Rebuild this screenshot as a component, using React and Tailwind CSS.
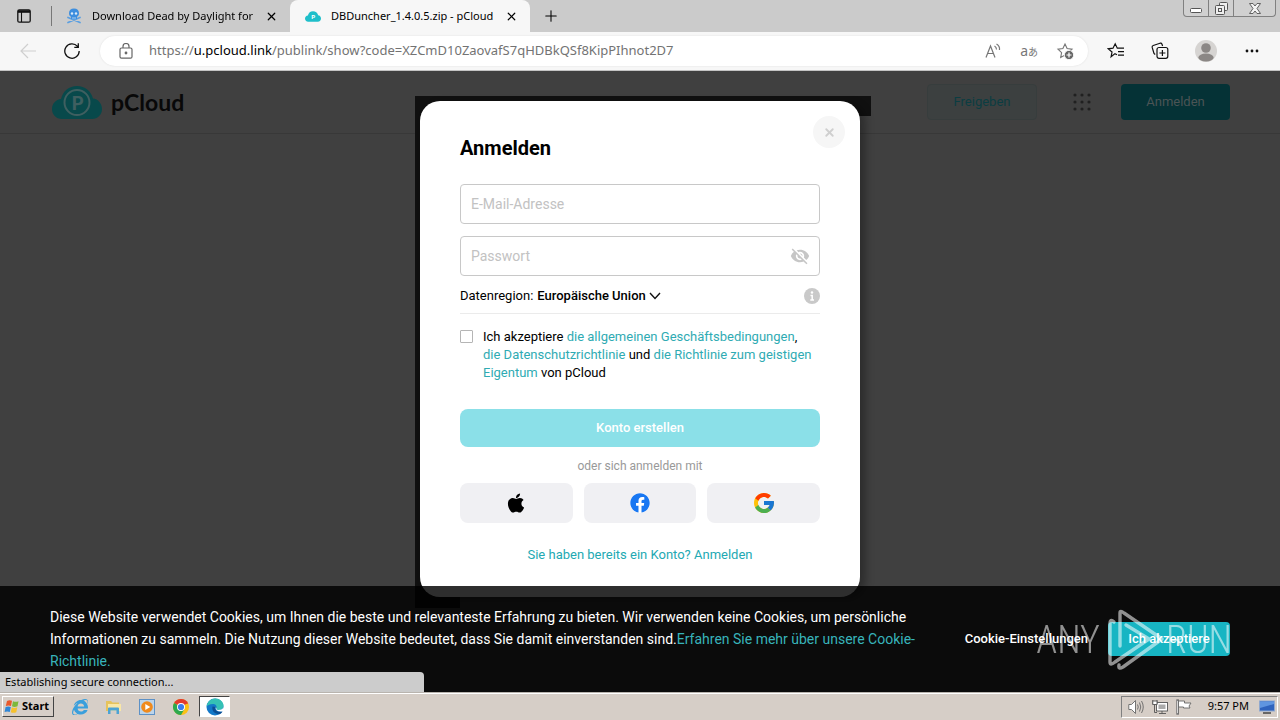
import React from "react";
import { FaApple, FaFacebook, FaInternetExplorer } from "react-icons/fa";
import { FcGoogle } from "react-icons/fc";
import { MdVisibilityOff } from "react-icons/md";
import { X, Plus } from "lucide-react";

const CLOUD = "M10 33C4 33 0 28.500 0 23C0 17.500 4 13.500 9 13C11 5 17 0 25 0C33 0 39 5 41 12.500C46 13 50 17.500 50 23C50 28.500 46 33 40 33Z";

function CloudLogo({ className, fill, ring, ringWidth }) {
  return (
    <svg viewBox="0 0 50 33" className={className} aria-hidden="true">
      <path d={CLOUD} fill={fill} />
      <circle cx="25" cy="16.500" r="12.500" fill="none" stroke={ring} strokeWidth={ringWidth} />
      <text x="25.500" y="23.500" textAnchor="middle" fontSize="19" fontWeight="900" fontFamily="Lato, sans-serif" fill={ring}>P</text>
    </svg>
  );
}

function Skull() {
  return (
    <svg viewBox="0 0 16 16" className="h-4 w-4 shrink-0" aria-hidden="true">
      <path d="M2 9.500L14 14.500M14 9.500L2 14.500" stroke="#5b9fe0" strokeWidth="1.800" strokeLinecap="round" />
      <path d="M8 .5C4.800.5 3 2.600 3 5.200C3 7 3.800 8 5 8.700V11H11V8.700C12.200 8 13 7 13 5.200C13 2.600 11.200.5 8 .5Z" fill="#3d8ede" />
      <circle cx="6" cy="5.500" r="1.200" fill="#dcebf8" />
      <circle cx="10" cy="5.500" r="1.200" fill="#dcebf8" />
      <path d="M7 9V11M9 9V11" stroke="#dcebf8" strokeWidth=".7" />
    </svg>
  );
}

const STAR = "M9 2L11.100 6.600L16 7.200L12.400 10.600L13.300 15.500L9 13.100L4.700 15.500L5.600 10.600L2 7.200L6.900 6.600Z";

function TabStrip() {
  return (
    <div className="flex h-8 items-center bg-[#cbcbcb] text-[11px] text-black">
      <button aria-label="Tab actions" className="flex w-[48px] shrink-0 justify-center">
        <svg viewBox="0 0 14 14" className="h-[14px] w-[14px]" fill="none" stroke="#111">
          <rect x=".8" y=".8" width="12.400" height="12.400" rx="1.500" strokeWidth="1.300" />
          <path d="M1 2.500H13" strokeWidth="2.600" />
          <path d="M4.500 3V13" strokeWidth="1.100" />
        </svg>
      </button>
      <div className="ml-[3px] h-5 w-px bg-[#777]" />
      <div className="flex h-full w-[238px] items-center pl-[14px] pr-3">
        <Skull />
        <span className="ml-[10px] flex-1 whitespace-nowrap bg-gradient-to-r from-black from-90% to-[#aaa] bg-clip-text text-transparent">
          Download Dead by Daylight for
        </span>
        <button aria-label="Close tab"><X size={13} strokeWidth={2.2} /></button>
      </div>
      <div className="flex h-full w-[240px] items-center rounded-t-lg bg-[#f7f7f7] pl-[15px] pr-3">
        <CloudLogo className="h-[11px] w-4 shrink-0" fill="#1fbfca" ring="#fff" ringWidth="0" />
        <span className="ml-[10px] flex-1 whitespace-nowrap">DBDuncher_1.4.0.5.zip - pCloud</span>
        <button aria-label="Close tab"><X size={13} strokeWidth={2.2} /></button>
      </div>
      <button aria-label="New tab" className="ml-3"><Plus size={18} strokeWidth={1.4} /></button>
      <div className="ml-auto mr-1 flex h-[17px] self-start rounded-b border border-t-0 border-[#808080] bg-[#d0d0d0]">
        <button aria-label="Minimize" className="flex w-[25px] items-center justify-center border-r border-[#808080]">
          <svg viewBox="0 0 12 12" className="h-3 w-3"><rect x=".5" y="6.500" width="11" height="4" rx="1" fill="#fff" stroke="#555" /></svg>
        </button>
        <button aria-label="Restore" className="flex w-[25px] items-center justify-center border-r border-[#808080]">
          <svg viewBox="0 0 13 13" className="h-[13px] w-[13px]" fill="#eee" stroke="#555">
            <rect x="4.500" y=".5" width="8" height="8" rx="1" />
            <rect x=".5" y="3.500" width="9" height="9" rx="1" />
            <rect x="3.500" y="6.500" width="3" height="3" />
          </svg>
        </button>
        <button aria-label="Close" className="flex w-[41px] items-center justify-center">
          <svg viewBox="0 0 12 11" className="h-[11px] w-3"><path d="M.5.5H4L6 3L8 .5H11.500L8 5.500L11.500 10.500H8L6 8L4 10.500H.5L4 5.500Z" fill="#f4f4f4" stroke="#555" strokeWidth=".9" /></svg>
        </button>
      </div>
    </div>
  );
}

function Toolbar() {
  return (
    <div className="flex h-[39px] items-center border-b border-[#c4c4c4] bg-[#f7f7f7] pr-[21px]">
      <button aria-label="Back" className="ml-5">
        <svg viewBox="0 0 16 16" className="h-4 w-4" fill="none" stroke="#cfcfcf" strokeWidth="1.200"><path d="M16 8H1M8 1L1 8L8 15" /></svg>
      </button>
      <button aria-label="Refresh" className="ml-7">
        <svg viewBox="0 0 16 16" className="h-4 w-4" fill="none" stroke="#111" strokeWidth="1.300"><path d="M13.500 3.400A7.200 7.200 0 1 0 15.200 8M14.300.3V4.300H10.300" /></svg>
      </button>
      <div className="ml-5 flex h-[30px] flex-1 items-center rounded-full bg-white pl-[19px] pr-[14px] shadow-[0_0_2px_#ddd]">
        <svg viewBox="0 0 14 16" className="h-4 w-[14px]" fill="none" stroke="#666" strokeWidth="1.200">
          <rect x="1" y="5" width="12" height="10.200" rx="1.500" /><path d="M4 5V3.500A3 3 0 0 1 10 3.500V5" /><circle cx="7" cy="10" r=".8" fill="#666" />
        </svg>
        <span className="ml-4 flex-1 whitespace-nowrap text-[13px] text-[#737373]">
          https://<span className="text-black">u.pcloud.link</span>/publink/show?code=XZCmD10ZaovafS7qHDBkQSf8KipPIhnot2D7
        </span>
        <button aria-label="Read aloud">
          <svg viewBox="0 0 18 16" className="h-4 w-[18px]" fill="none" stroke="#777" strokeWidth="1.200"><path d="M2 14.500L6.500 3L11 14.500M3.600 10.500H9.400M10.500 3A4 4 0 0 1 12.500 6.500M12.500 1A6 6 0 0 1 15.500 7" /></svg>
        </button>
        <button aria-label="Translate" className="ml-[18px] flex items-baseline text-[#777]">
          <span className="text-[14px] leading-4">a</span><span className="font-['Noto_Sans_CJK_JP',sans-serif] text-[10px] leading-4">あ</span>
        </button>
        <button aria-label="Add to favorites" className="ml-[18px]">
          <svg viewBox="0 0 18 18" className="h-[18px] w-[18px]" fill="none" stroke="#777" strokeWidth="1.100">
            <path d={STAR} /><circle cx="13" cy="13" r="4.600" fill="#666" stroke="#fff" strokeWidth=".8" /><path d="M13 10.500V15.500M10.500 13H15.500" stroke="#fff" strokeWidth="1.200" />
          </svg>
        </button>
      </div>
      <button aria-label="Favorites" className="ml-[19px]">
        <svg viewBox="0 0 18 18" className="h-[18px] w-[18px]" fill="none" stroke="#111" strokeWidth="1.200">
          <path d="M10 12.700L8 11.600L4.100 14.800L5 10L1.200 6.800L6 6.200L8.200 1.800L10.300 6.200H17M11 9.700H17M11 13.200H17" />
        </svg>
      </button>
      <button aria-label="Collections" className="ml-[26px]">
        <svg viewBox="0 0 18 18" className="h-[18px] w-[18px]" fill="none" stroke="#111" strokeWidth="1.200">
          <path d="M4.200 12.500L3 11.500L1.200 5.500Q.8 4 2.200 3.500L9 1.200Q10.500.8 11 2.200L11.600 4" /><rect x="6" y="5.500" width="10.800" height="10.800" rx="2" /><path d="M11.400 8V14M8.400 11H14.400" />
        </svg>
      </button>
      <button aria-label="Profile" className="ml-[26px]">
        <svg viewBox="0 0 22 22" className="h-[22px] w-[22px]"><circle cx="11" cy="11" r="11" fill="#d6d4d2" /><circle cx="11" cy="8" r="4.800" fill="#8b8785" /><ellipse cx="11" cy="17.500" rx="7.600" ry="4" fill="#8b8785" /></svg>
      </button>
      <button aria-label="Settings and more" className="ml-7">
        <svg viewBox="0 0 14 4" className="h-1 w-[14px]" fill="#111"><circle cx="2" cy="2" r="1.400" /><circle cx="7" cy="2" r="1.400" /><circle cx="12" cy="2" r="1.400" /></svg>
      </button>
    </div>
  );
}

function SiteHeader() {
  return (
    <header className="flex h-[63px] items-center border-b border-[#383838] px-[50px]">
      <a href="#home" className="ml-[2px] flex items-center">
        <CloudLogo className="h-[33px] w-[50px]" fill="#08494b" ring="#3f5f60" ringWidth="2" />
        <span className="ml-[9px] font-[Lato,sans-serif] text-[23px] font-bold leading-7 text-[#080808]">pCloud</span>
      </a>
      <button className="ml-auto h-9 w-[110px] rounded border border-[#373d3d] bg-[#3c4040] text-[13px] text-[#0b3d42]">Freigeben</button>
      <button aria-label="Apps" className="ml-9">
        <svg viewBox="0 0 18 18" className="h-[18px] w-[18px]" fill="#202020">
          {[2, 9, 16].map((y) => [2, 9, 16].map((x) => <circle key={x + "-" + y} cx={x} cy={y} r="1.600" />))}
        </svg>
      </button>
      <button className="ml-[30px] h-9 w-[109px] rounded bg-[#053236] text-[13px] text-[#4b5455]">Anmelden</button>
    </header>
  );
}

function LoginDialog() {
  const social = "flex h-10 items-center justify-center rounded-lg bg-[#f0f0f3]";
  const link = "text-[#2fabb3]";
  return (
    <div className="absolute inset-0 flex items-start justify-center pt-[30px]">
      <div className="relative w-[440px]">
        <div className="absolute -left-[5px] -top-[5px] h-5 w-[456px] bg-[#101010]" />
        <div className="absolute -bottom-[11px] -left-[5px] -top-[5px] w-[45px] bg-[#101010]" />
        <form role="dialog" aria-label="Anmelden" className="relative rounded-[20px] bg-white px-10 pb-[33px] pt-[35px] text-[13px] text-black shadow-[6px_2px_8px_rgba(0,0,0,0.3)]">
          <h1 className="text-[20px] font-bold leading-6">Anmelden</h1>
          <button type="button" aria-label="Schließen" className="absolute right-[15px] top-[15px] flex h-8 w-8 items-center justify-center rounded-full bg-[#f6f6f6] text-[#cfcfcf]">
            <X size={13} strokeWidth={3.4} />
          </button>
          <input type="email" aria-label="E-Mail-Adresse" placeholder="E-Mail-Adresse" className="mt-6 block h-10 w-full rounded border border-[#c8c8c8] px-[10px] text-[14px] placeholder:text-[#c2c2c2]" />
          <div className="relative mt-3">
            <input type="password" aria-label="Passwort" placeholder="Passwort" className="block h-10 w-full rounded border border-[#c8c8c8] px-[10px] text-[14px] placeholder:text-[#c2c2c2]" />
            <button type="button" aria-label="Passwort anzeigen" className="absolute right-[10px] top-[10px] text-[#c6c6c6]"><MdVisibilityOff size={20} /></button>
          </div>
          <div className="flex h-[38px] items-center border-b border-[#ebebeb] pt-[2px]">
            <label htmlFor="region">Datenregion:</label>
            <select id="region" className="ml-1 appearance-none bg-transparent font-medium">
              <option>Europäische Union</option>
            </select>
            <svg viewBox="0 0 12 8" className="ml-[3px] h-2 w-3" fill="none" stroke="#111" strokeWidth="1.400"><path d="M1 1L6 6.500L11 1" /></svg>
            <button type="button" aria-label="Info" className="ml-auto">
              <svg viewBox="0 0 16 16" className="h-4 w-4"><circle cx="8" cy="8" r="8" fill="#c9c9c9" /><circle cx="8" cy="4.500" r="1.200" fill="#fff" /><path d="M6.500 7.500H8.200V12M6.300 12H10" fill="none" stroke="#fff" strokeWidth="1.500" /></svg>
            </button>
          </div>
          <div className="mt-[14px] flex items-start gap-[10px]">
            <input id="terms" type="checkbox" className="mt-[2px] h-[13px] w-[13px] shrink-0 appearance-none rounded-[1px] border border-[#b5b5b5]" />
            <label htmlFor="terms" className="leading-[18px]">
              Ich akzeptiere <a href="#agb" className={link}>die allgemeinen Geschäftsbedingungen</a>,<br />
              <a href="#privacy" className={link}>die Datenschutzrichtlinie</a> und <a href="#ip" className={link}>die Richtlinie zum geistigen Eigentum</a> von pCloud
            </label>
          </div>
          <button type="submit" className="mt-[27px] h-[38px] w-full rounded-lg bg-[#8be0e8] font-medium text-white">Konto erstellen</button>
          <p className="mt-[10px] text-center text-[12px] leading-[18px] text-[#999]">oder sich anmelden mit</p>
          <div className="mt-2 grid grid-cols-3 gap-[11px]">
            <button type="button" aria-label="Apple" className={social}><FaApple size={22} /></button>
            <button type="button" aria-label="Facebook" className={social}><span className="rounded-full bg-white"><FaFacebook size={20} color="#1877f2" /></span></button>
            <button type="button" aria-label="Google" className={social}><FcGoogle size={24} /></button>
          </div>
          <p className="mt-[23px] text-center leading-[18px]"><a href="#login" className="text-[#22a9b3]">Sie haben bereits ein Konto? Anmelden</a></p>
        </form>
      </div>
    </div>
  );
}

function Watermark() {
  return (
    <div className="pointer-events-none absolute right-12 top-[22px] flex h-16 items-center font-['Roboto_Condensed','Liberation_Sans_Narrow',sans-serif] text-[38px] font-light leading-none text-white opacity-55">
      <span>ANY</span>
      <svg viewBox="0 0 60 64" className="ml-[6px] h-16 w-[60px]" fill="none" stroke="#fff" strokeWidth="3.400" strokeLinejoin="round" strokeLinecap="round">
        <path d="M14 38V5Q14 2 18 5L56 31L17 59Q12 62 13 57" />
        <path d="M8 14Q4 10 4 16V54Q4 58 9 54L43 31L20 17" />
      </svg>
      <span>RUN</span>
    </div>
  );
}

function CookieBanner() {
  return (
    <div className="absolute inset-x-0 bottom-0 flex h-[106px] items-start bg-black/82 px-[50px] pt-5 text-white">
      <p className="max-w-[880px] flex-1 text-[14px] leading-[22px]">
        Diese Website verwendet Cookies, um Ihnen die beste und relevanteste Erfahrung zu bieten. Wir verwenden keine Cookies, um persönliche Informationen zu sammeln. Die Nutzung dieser Website bedeutet, dass Sie damit einverstanden sind.<a href="#cookies" className="text-[#38b4bb]">Erfahren Sie mehr über unsere Cookie-Richtlinie.</a>
      </p>
      <div className="ml-auto mt-4 flex items-center gap-5 text-[13px] font-medium">
        <button className="whitespace-nowrap">Cookie-Einstellungen</button>
        <button className="h-[34px] w-[122px] rounded bg-[#17b5c3]">Ich akzeptiere</button>
      </div>
      <Watermark />
    </div>
  );
}

function EdgeIcon() {
  return (
    <svg viewBox="0 0 18 18" className="h-[18px] w-[18px]">
      <circle cx="9" cy="9" r="8.500" fill="#1378c8" />
      <path d="M.6 8.500C1.200 3.500 5 .5 9.200.5C14 .5 17.500 4 17.500 7.500C17.500 10.500 15 12 12.500 12C10.500 12 10 11 10.500 10C11 8.500 10 6 7 6C3.500 6 1 7.500.6 8.500Z" fill="#35c1b5" />
      <path d="M6.500 8.500C5.500 13 8.500 16 13.500 16.200C15 15.500 16 14.500 16.600 13.200C12 15 8.500 12.500 9.500 9Z" fill="#0b4e94" />
      <path d="M10.500 10C10 11 10.500 12 12.500 12C14.500 12 16 11.300 17.500 9.500L18 13C13 14.500 9.500 13 9.500 9.500Z" fill="#fff" />
    </svg>
  );
}

function Taskbar() {
  return (
    <footer className="flex h-7 items-center border-t border-[#b9b4ae] bg-[#d6cec7] pl-[2px] pr-[2px] shadow-[inset_0_1px_0_#fff]">
      <button className="flex h-[21px] w-[52px] items-center gap-[2px] border border-b-[#444] border-l-white border-r-[#444] border-t-white px-[1px] text-[11px] font-bold text-black">
        <svg viewBox="0 0 16 15" className="h-[15px] w-4 shrink-0">
          <path d="M3 2Q5.500.5 8 1.800L7 7Q4.500 5.800 1.800 7Z" fill="#e9592b" /><path d="M9 2.200Q11.500 3.500 14.500 2.200L13.500 7.200Q10.500 8.500 8 7.300Z" fill="#7db83a" />
          <path d="M1.600 8Q4.300 6.800 6.800 8L5.800 13Q3.300 11.800.6 13Z" fill="#2f86d6" /><path d="M7.800 8.300Q10.500 9.500 13.300 8.200L12.300 13.200Q9.500 14.500 6.800 13.200Z" fill="#f6c12d" />
        </svg>
        <span>Start</span>
      </button>
      <button aria-label="Internet Explorer" className="ml-[18px] text-[#3a9fdc]"><FaInternetExplorer size={16} /></button>
      <button aria-label="Explorer" className="ml-[17px]">
        <svg viewBox="0 0 17 16" className="h-4 w-[17px]"><path d="M1 2H6L7.500 3.500H14V12H1Z" fill="#e6c35c" /><path d="M3 5H16V12H3Z" fill="#f9e7a6" /><path d="M3 15V9.500Q3 8.500 4 8.500H13Q14 8.500 14 9.500V15H11.500V11.500H5.500V15Z" fill="#4da3d4" /></svg>
      </button>
      <button aria-label="Media Player" className="ml-[17px]">
        <svg viewBox="0 0 16 16" className="h-4 w-4"><rect x=".5" y=".5" width="15" height="15" fill="#bcd4ea" stroke="#5d91c6" /><circle cx="8" cy="8" r="5.800" fill="#f08a1d" /><path d="M6.300 5L11.300 8L6.300 11Z" fill="#fff" /></svg>
      </button>
      <button aria-label="Chrome" className="ml-[18px]">
        <svg viewBox="0 0 16 16" className="h-4 w-4"><circle cx="8" cy="8" r="8" fill="#fbc116" /><path d="M8 8L1.070 4A8 8 0 0 1 14.930 4Z" fill="#e33b2e" /><path d="M8 8L1.070 4A8 8 0 0 0 8 16L11.500 10Z" fill="#2da94f" /><path d="M8 4.500H15.200L14.930 4L8 3Z" fill="#e33b2e" /><circle cx="8" cy="8" r="4" fill="#fff" /><circle cx="8" cy="8" r="3.100" fill="#3b7ded" /></svg>
      </button>
      <button aria-label="Edge" className="ml-[10px] flex h-[21px] w-[31px] items-center justify-center border border-b-white border-l-[#444] border-r-white border-t-[#444] bg-white"><EdgeIcon /></button>
      <div className="ml-auto flex h-[22px] items-center border border-b-white border-l-[#808080] border-r-white border-t-[#808080] pl-[6px] pr-[2px] text-[11px] text-black">
        <svg viewBox="0 0 16 16" className="h-4 w-4" fill="#fff" stroke="#666" strokeWidth=".9"><path d="M.8 5.500H3.500L7.500 1.500V14.500L3.500 10.500H.8Z" /><path d="M9.500 5.500Q11 8 9.500 10.500M11.500 3.500Q14 8 11.500 12.500M13.500 2Q17 8 13.500 14" fill="none" /></svg>
        <svg viewBox="0 0 16 16" className="ml-2 h-4 w-4" stroke="#555" strokeWidth=".9"><rect x="4.500" y="3.500" width="11" height="8.500" fill="#fff" /><rect x="6.500" y="5.500" width="7" height="4.500" fill="#aaa" stroke="none" /><path d="M7 14.500H14M10 12V14.500" /><path d="M.8 1V5H2.500V13.500H5M5 1V5H2.500" fill="none" /><rect x=".8" y="2" width="4.200" height="3.500" fill="#fff" /></svg>
        <svg viewBox="0 0 16 16" className="ml-2 h-4 w-4" fill="#fff" stroke="#666" strokeWidth=".9"><rect x=".8" y=".8" width="1.700" height="14.400" /><path d="M2.500 2H8.500V4H15L13 7L14 9H7.500V8H2.500Z" /></svg>
        <span className="ml-4 whitespace-nowrap">9:57 PM</span>
        <svg viewBox="0 0 16 14" className="ml-[10px] h-[14px] w-4"><rect x=".5" y="1" width="15" height="10" fill="#2f63bd" stroke="#8fa8cf" /><path d="M1 1.500H15V4L1 8Z" fill="#5f95e0" /><path d="M4 13H12" stroke="#444" strokeWidth="1.500" /></svg>
      </div>
    </footer>
  );
}

export default function App() {
  return (
    <div className="flex min-h-screen flex-col font-['Noto_Sans',sans-serif]">
      <TabStrip />
      <Toolbar />
      <main className="relative min-h-[560px] flex-1 overflow-hidden bg-[#404040] font-[Roboto,sans-serif]">
        <SiteHeader />
        <LoginDialog />
        <CookieBanner />
        <div role="status" className="absolute bottom-0 left-0 h-5 w-1/3 max-w-[424px] whitespace-nowrap rounded-tr bg-[#cccccc] pl-[5px] font-['Noto_Sans',sans-serif] text-[11px] leading-5 text-black">
          Establishing secure connection...
        </div>
      </main>
      <Taskbar />
    </div>
  );
}
